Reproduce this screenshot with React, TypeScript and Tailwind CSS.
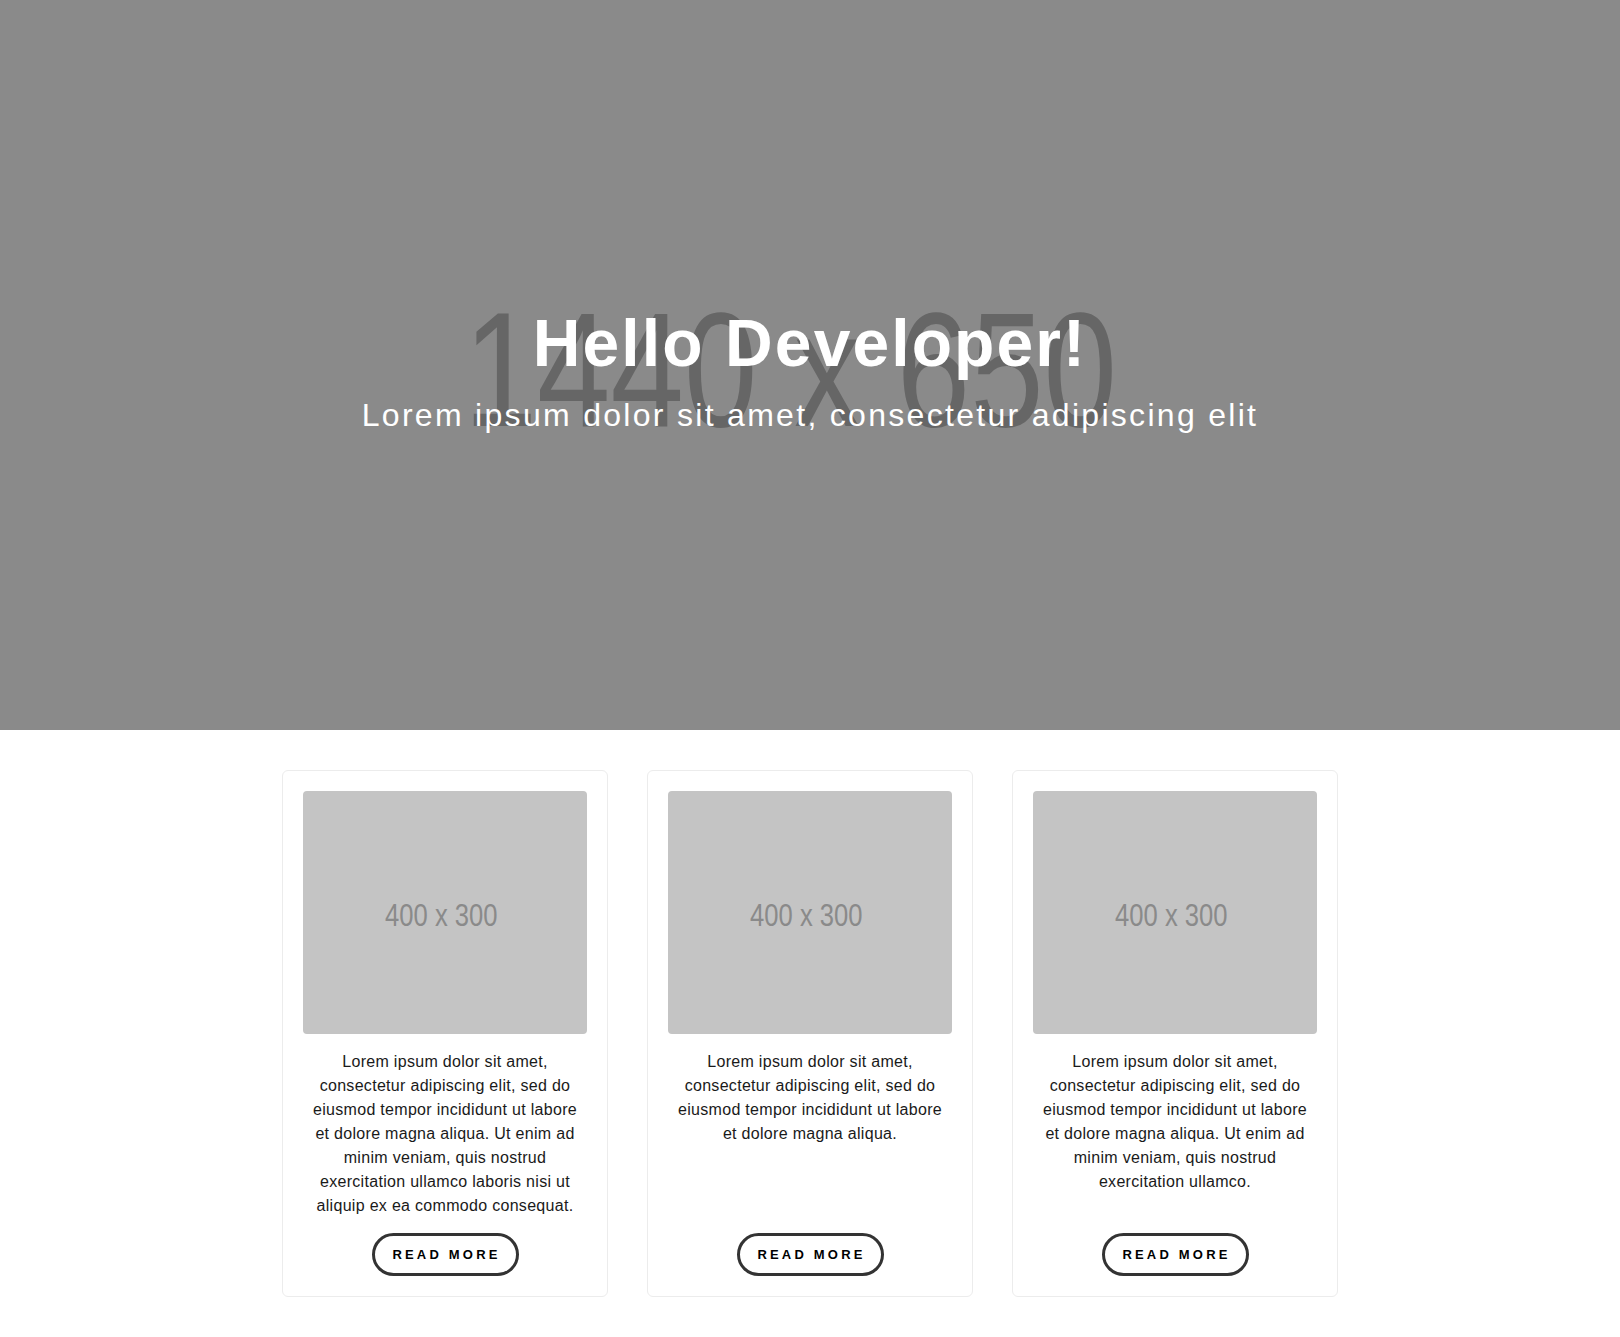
import React from "react";

const cards = [
  "Lorem ipsum dolor sit amet, consectetur adipiscing elit, sed do eiusmod tempor incididunt ut labore et dolore magna aliqua. Ut enim ad minim veniam, quis nostrud exercitation ullamco laboris nisi ut aliquip ex ea commodo consequat.",
  "Lorem ipsum dolor sit amet, consectetur adipiscing elit, sed do eiusmod tempor incididunt ut labore et dolore magna aliqua.",
  "Lorem ipsum dolor sit amet, consectetur adipiscing elit, sed do eiusmod tempor incididunt ut labore et dolore magna aliqua. Ut enim ad minim veniam, quis nostrud exercitation ullamco.",
];

function Card({ text }: { text: string }) {
  return (
    <div className="flex flex-col rounded-md border border-[#ececec] bg-white p-5">
      {/* placeholder image */}
      <div className="flex h-[243px] items-center justify-center overflow-hidden rounded bg-[#c4c4c4] pr-2">
        <span className="inline-block scale-x-[0.8] pt-1 text-[32px] text-[#8a8a8a]">400 x 300</span>
      </div>
      <p className="mt-4 px-2 text-center text-base leading-6 tracking-[0.3px] text-[#1a1a1a]">{text}</p>
      <div className="mt-auto flex justify-center pt-[15px]">
        <button className="h-[43px] w-[147px] rounded-full border-[3px] border-[#333] bg-white pl-[3px] text-[13px] font-bold tracking-[3.2px] text-black">
          READ MORE
        </button>
      </div>
    </div>
  );
}

export default function App() {
  return (
    <div className="min-h-[1337px] bg-white font-['Liberation_Sans',Arial,sans-serif]">
      {/* Hero */}
      <header className="relative flex h-[730px] flex-col items-center justify-center overflow-hidden bg-[#8a8a8a]">
        <span
          aria-hidden
          className="absolute inset-0 flex items-center justify-center pr-[40px] text-[163px] leading-none text-[#666666]"
        >
          <span className="inline-block scale-x-[0.81] pt-2">1440 x 650</span>
        </span>
        <div className="relative flex flex-col items-center pt-[10px]">
          <h1 className="text-[66px] font-bold leading-[76px] tracking-[2.1px] text-white">Hello Developer!</h1>
          <p className="mt-[14px] text-[32px] leading-10 tracking-[2.3px] text-white">
            Lorem ipsum dolor sit amet, consectetur adipiscing elit
          </p>
        </div>
      </header>

      {/* Cards */}
      <section className="flex justify-center py-10">
        <div className="grid grid-cols-[326px_326px_326px] gap-[39px]">
          {cards.map((t, i) => (
            <Card key={i} text={t} />
          ))}
        </div>
      </section>
    </div>
  );
}
